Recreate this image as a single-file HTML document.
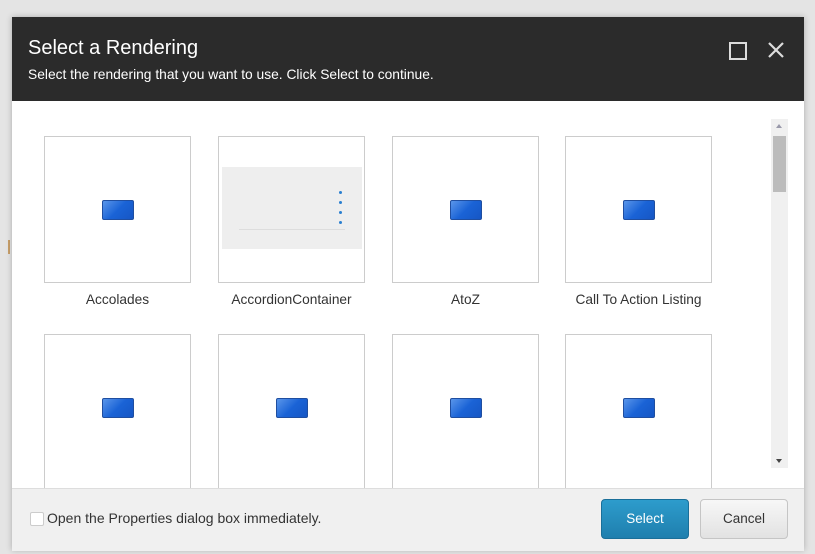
<!DOCTYPE html>
<html><head><style>
body{margin:0;width:815px;height:554px;background:#e4e4e4;position:relative;overflow:hidden;font-family:"Liberation Sans",sans-serif;}
.dlg{position:absolute;left:12px;top:17px;width:792px;height:533px;background:#fff;box-shadow:0 0 6px rgba(0,0,0,.25);}
.hd{position:absolute;left:0;top:0;width:792px;height:84px;background:#2b2b2b;color:#fff;}
.t{position:absolute;left:16px;top:20px;font-size:20px;}
.s{position:absolute;left:16px;top:50px;font-size:13.8px;}
.tile{position:absolute;width:145px;height:145px;border:1px solid #ccc;background:#fff;}
.ic{position:absolute;left:57px;top:63px;width:30px;height:18px;border:1px solid #1f4ea0;border-radius:2px;background:linear-gradient(135deg,#5a96ea,#1a63d6 50%,#1656c4);}
.lb{position:absolute;width:147px;text-align:center;font-size:13.7px;color:#333;}
.ft{position:absolute;left:0;top:471px;width:792px;height:62px;background:#f0f0f0;border-top:1px solid #ddd;}
.btn{position:absolute;top:10px;height:38px;border-radius:4px;font-size:13.5px;text-align:center;line-height:38px;}
</style></head><body>
<div style="position:absolute;left:8px;top:240px;width:2px;height:14px;background:#c9a06a"></div>
<div class="dlg">
<div class="hd"><div class="t">Select a Rendering</div><div class="s">Select the rendering that you want to use. Click Select to continue.</div>
<div style="position:absolute;left:717px;top:25px;width:14px;height:14px;border:2px solid #ddd"></div>
<svg style="position:absolute;left:755px;top:24px" width="18" height="18"><path d="M2 2L16 16M16 2L2 16" stroke="#ddd" stroke-width="2.2"/></svg></div>
<div class="tile" style="left:32px;top:119px"><div class="ic"></div></div>
<div class="tile" style="left:206px;top:119px"><div style="position:absolute;left:3px;top:30px;width:140px;height:82px;background:#eee"><div style="position:absolute;left:17px;top:20px;width:106px;height:42px;border-bottom:1px solid #ddd"></div>
<div style="position:absolute;left:117px;top:24px;width:3px;height:3px;border-radius:50%;background:#2a7fd0;box-shadow:0 10px #2a7fd0,0 20px #2a7fd0,0 30px #2a7fd0"></div></div></div>
<div class="tile" style="left:380px;top:119px"><div class="ic"></div></div>
<div class="tile" style="left:553px;top:119px"><div class="ic"></div></div>
<div class="lb" style="left:32px;top:275px">Accolades</div>
<div class="lb" style="left:206px;top:275px">AccordionContainer</div>
<div class="lb" style="left:380px;top:275px">AtoZ</div>
<div class="lb" style="left:553px;top:275px">Call To Action Listing</div>
<div class="tile" style="left:32px;top:317px;height:160px"><div class="ic"></div></div>
<div class="tile" style="left:206px;top:317px;height:160px"><div class="ic"></div></div>
<div class="tile" style="left:380px;top:317px;height:160px"><div class="ic"></div></div>
<div class="tile" style="left:553px;top:317px;height:160px"><div class="ic"></div></div>
<div style="position:absolute;left:759px;top:102px;width:17px;height:349px;background:#f0f0f0"><div style="position:absolute;left:2px;top:17px;width:13px;height:56px;background:#bcbcbc"></div>
<div style="position:absolute;left:5px;top:5px;border:3px solid transparent;border-bottom:4px solid #99a;border-top:0"></div>
<div style="position:absolute;left:5px;top:340px;border:3px solid transparent;border-top:4px solid #444;border-bottom:0"></div></div>
<div class="ft">
<div style="position:absolute;left:18px;top:23px;width:12px;height:12px;border:1px solid #ccc;border-radius:2px;background:#fff"></div>
<div style="position:absolute;left:35px;top:21px;font-size:14px;color:#333">Open the Properties dialog box immediately.</div>
<div class="btn" style="left:589px;width:86px;background:linear-gradient(#2d9ccc,#1f7fae);border:1px solid #1a6f99;color:#fff">Select</div>
<div class="btn" style="left:688px;width:86px;background:linear-gradient(#f7f7f7,#e2e2e2);border:1px solid #c5c5c5;color:#333">Cancel</div>
</div></div>
</body></html>
